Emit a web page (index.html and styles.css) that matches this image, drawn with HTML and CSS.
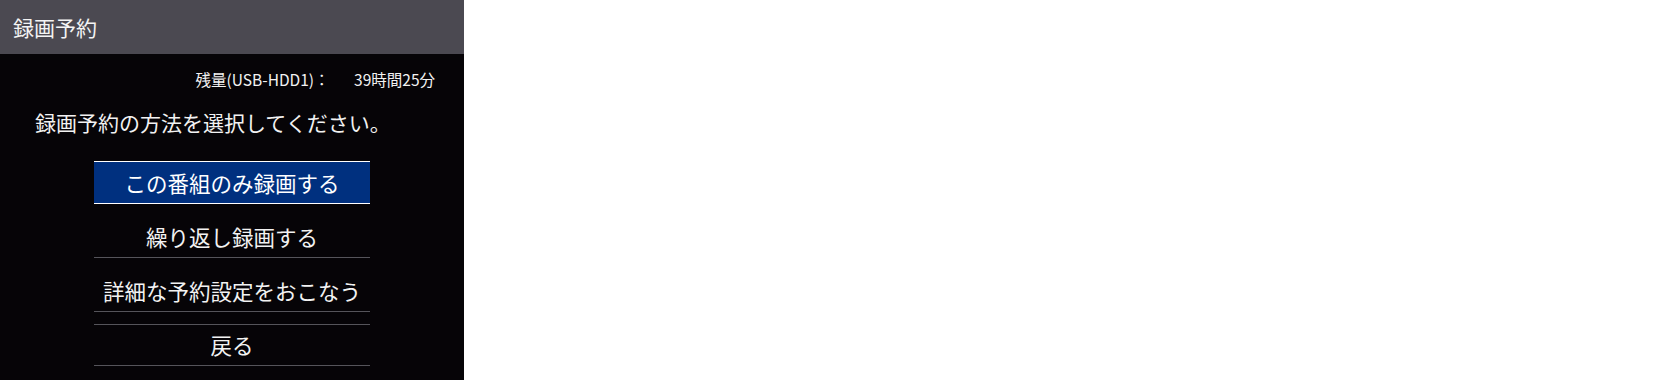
FILE: index.html
```html
<!DOCTYPE html>
<html lang="ja">
    <head>
        <meta charset="UTF-8" />
        <meta name="viewport" content="width=device-width, initial-scale=1.0" />
        <title>録画予約</title>
        <link rel="stylesheet" href="styles.css">
    </head>
    <body>
        <div class="panel">
            <div class="panel-header">録画予約</div>
            <div class="remaining">
                <span class="remaining-label">残量(USB-HDD1)：</span>
                <span class="remaining-time">39時間25分</span>
            </div>
            <p class="prompt">録画予約の方法を選択してください。</p>
            <div class="menu">
                <div class="menu-item selected">この番組のみ録画する</div>
                <div class="menu-item">繰り返し録画する</div>
                <div class="menu-item">詳細な予約設定をおこなう</div>
                <div class="menu-item back">戻る</div>
            </div>
        </div>
    </body>
</html>
```

FILE: styles.css
```css
body {
    margin: 0;
    padding: 0;
    background: #ffffff;
    font-family: "Noto Sans CJK JP", "Noto Sans", sans-serif;
    color: #f2f2f2;
}
.panel {
    width: 464px;
    height: 380px;
    background-color: #060407;
    overflow: hidden;
}
.panel-header {
    height: 54px;
    line-height: 54px;
    padding-left: 13px;
    font-size: 21px;
    background-color: #4b4951;
    color: #f4f4f4;
}
.remaining {
    padding: 16px 29px 0 0;
    height: 18px;
    line-height: 18px;
    font-size: 15.5px;
    text-align: right;
}
.remaining-label {
    margin-right: 21px;
}
.prompt {
    margin: 20px 0 0 0;
    padding-left: 35px;
    height: 28px;
    line-height: 28px;
    font-size: 21px;
}
.menu {
    margin-top: 25px;
}
.menu-item {
    width: 276px;
    height: 41px;
    line-height: 41px;
    margin: 12px auto 0 auto;
    font-size: 21.5px;
    text-align: center;
    border-bottom: 1px solid #55545a;
}
.menu-item.selected {
    margin-top: 0;
    background-color: #00307f;
    border-top: 1px solid #ffffff;
    border-bottom: 1px solid #ffffff;
    color: #ffffff;
}
.menu-item.back {
    height: 40px;
    line-height: 40px;
    border-top: 1px solid #55545a;
}
```
